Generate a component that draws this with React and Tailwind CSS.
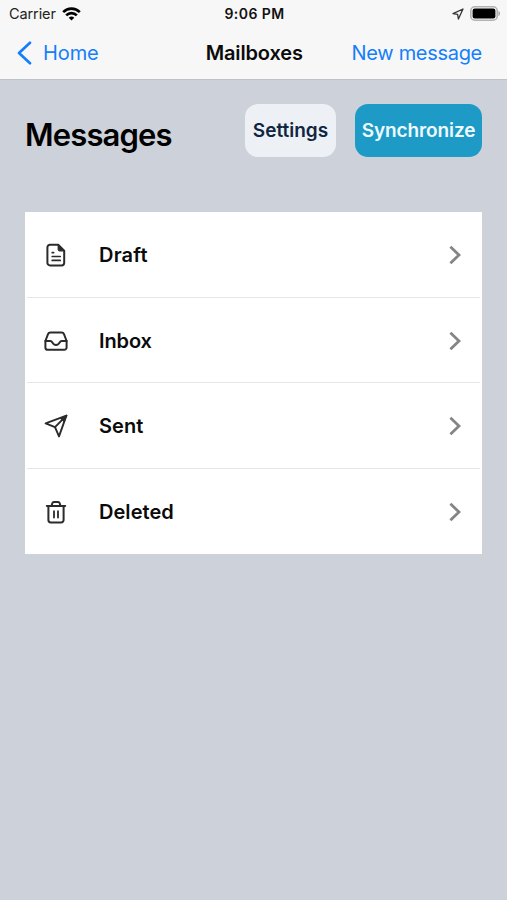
const DraftIcon = () => (
    <svg width="24" height="24" viewBox="0 0 24 24" fill="none" stroke="#2b2b2b" strokeWidth="2" strokeLinejoin="round" strokeLinecap="round">
        <path d="M6 1.8h8.2l6 6v12a2.6 2.6 0 0 1-2.6 2.6H6a2.6 2.6 0 0 1-2.6-2.6V4.4A2.6 2.6 0 0 1 6 1.8Z" />
        <path d="M14.2 1.8v4.4a1.6 1.6 0 0 0 1.6 1.6h4.4Z" fill="#2b2b2b" strokeWidth="1.2" />
        <path d="M8.2 9.6h1.4M8.2 13.5h8M8.2 17.4h8" strokeWidth="1.7" />
    </svg>
);

const InboxIcon = () => (
    <svg width="24" height="24" viewBox="0 0 24 24" fill="none" stroke="#2b2b2b" strokeWidth="2" strokeLinejoin="round" strokeLinecap="round">
        <path d="M1.4 12 4 5.2a2.6 2.6 0 0 1 2.4-1.7h11.2A2.6 2.6 0 0 1 20 5.2l2.6 6.8v6.4a2.4 2.4 0 0 1-2.4 2.4H3.8a2.4 2.4 0 0 1-2.4-2.4Z" />
        <path d="M1.4 12h5c1.2 0 1.5.7 1.9 1.4.7 1.5 2 2.5 3.7 2.5s3-1 3.7-2.5c.4-.7.7-1.4 1.9-1.4h5" />
    </svg>
);

const SentIcon = () => (
    <svg width="24" height="24" viewBox="0 0 24 24" fill="none" stroke="#2b2b2b" strokeWidth="1.9" strokeLinejoin="round" strokeLinecap="round">
        <path d="M22.4 1.6 1.6 9.4l9.4 3.7 4 9.3Z" />
        <path d="M22.4 1.6 11 13.1" />
        <path d="m22.4 1.6-6.4 2.6 3.9 3.2Z" fill="#2b2b2b" strokeWidth="1" />
    </svg>
);

const DeletedIcon = () => (
    <svg width="24" height="24" viewBox="0 0 24 24" fill="none" stroke="#2b2b2b" strokeWidth="2" strokeLinejoin="round" strokeLinecap="round">
        <path d="M2.8 6h18.4" />
        <path d="M7.6 5.8 8.4 3a1.6 1.6 0 0 1 1.5-1.1h4.2A1.6 1.6 0 0 1 15.6 3l.8 2.8" />
        <path d="M4.4 6v14a2.4 2.4 0 0 0 2.4 2.4h10.4a2.4 2.4 0 0 0 2.4-2.4V6" />
        <path d="M10 11.2v6.4M14 11.2v6.4" strokeWidth="1.8" />
    </svg>
);

const mailboxes = [
    { name: 'Draft', icon: DraftIcon, spacing: 'tracking-[0.2px]' },
    { name: 'Inbox', icon: InboxIcon, spacing: 'tracking-[-0.1px]' },
    { name: 'Sent', icon: SentIcon, spacing: 'tracking-[0.1px]' },
    { name: 'Deleted', icon: DeletedIcon, spacing: 'tracking-[0.05px]' },
];

const StatusBar = () => (
    <div className="grid h-[27px] grid-cols-3 items-center pl-[8px] pr-[6px]">
        <div className="flex items-center gap-[6px] pl-px">
            <span className="text-[14.5px] tracking-[-0.1px] text-[#222]">Carrier</span>
            <svg width="19" height="14" viewBox="0 0 19 14" fill="none" stroke="#000" strokeWidth="2.7">
                <path d="M1.2 5.1a11.8 11.8 0 0 1 16.6 0" />
                <path d="M4.2 8.4a7.5 7.5 0 0 1 10.6 0" />
                <path d="M9.5 13.6 6.7 10.8a4 4 0 0 1 5.6 0Z" fill="#000" stroke="none" />
            </svg>
        </div>
        <span className="text-center text-[14px] tracking-[0.45px] font-semibold text-[#111]">9:06 PM</span>
        <div className="flex items-center justify-end gap-[6px]">
            <svg width="12" height="12" viewBox="0 0 12 12" fill="none" stroke="#333" strokeWidth="1.3" strokeLinejoin="round">
                <path d="M11 1 1 5.6l4.6.8.8 4.6Z" />
            </svg>
            <svg width="31" height="15" viewBox="0 0 31 15">
                <rect x="0.8" y="0.8" width="26.4" height="13.4" rx="4" fill="#f7f7f7" stroke="#b2b2b2" strokeWidth="1.6" />
                <rect x="2.6" y="2.6" width="22.8" height="9.8" rx="2.2" fill="#000" />
                <path d="M28.4 5c2.2.6 2.2 4.4 0 5Z" fill="#aaa" />
            </svg>
        </div>
    </div>
);

const NavBar = () => (
    <div className="flex h-[51px] items-center justify-between pl-[17px] pr-[25px] text-[20px] text-[#147efb]">
        <button className="flex w-[140px] items-center gap-[11px]">
            <svg width="15" height="24" viewBox="0 0 15 24" fill="none" stroke="#147efb" strokeWidth="2.7" strokeLinecap="round" strokeLinejoin="round">
                <path d="M13 1.8 2 12l11 10.2" />
            </svg>
            <span className="tracking-[-0.1px]">Home</span>
        </button>
        <h1 className="font-semibold tracking-[-0.15px] text-[#0b0b0b]">Mailboxes</h1>
        <button className="tracking-[-0.3px] whitespace-nowrap">New message</button>
    </div>
);

const App = () => {
    return (
        <div className="flex min-h-screen flex-col bg-[#cdd2da] font-['Inter',sans-serif]">
            <header className="h-20 border-b border-[#bfc3c9] bg-[#f7f7f7]">
                <StatusBar />
                <NavBar />
            </header>

            <main className="px-[25px] pt-[23.5px]">
                <div className="flex items-start">
                    <h2 className="flex-1 pt-[10px] text-[31px] leading-[42px] font-semibold tracking-[-0.85px] text-black">Messages</h2>
                    <div className="flex gap-[19px] text-[19px] font-semibold">
                        <button className="h-[53.5px] w-[91px] rounded-[13px] bg-[#edf1f5] pt-[2px] text-[#102542]">Settings</button>
                        <button className="h-[53.5px] w-[127px] rounded-[13px] bg-[#1e9ac7] pt-[2px] tracking-[-0.1px] text-[#edfaff]">Synchronize</button>
                    </div>
                </div>

                {/* Mailbox list */}
                <ul className="mt-[55.25px] bg-white">
                    {mailboxes.map(({ name, icon: Icon, spacing }, i) => (
                        <li key={name} className="px-[2px]">
                            <div className={`flex h-[85.5px] items-center pt-px pr-[19px] pl-[17px] ${i < 3 ? 'border-b border-[#e3e6e9]' : ''}`}>
                                <Icon />
                                <span className={`ml-[31px] flex-1 text-[20px] font-semibold text-[#0b0b0b] ${spacing}`}>{name}</span>
                                <svg width="12" height="20" viewBox="0 0 12 20" fill="none" stroke="#858585" strokeWidth="2.8">
                                    <path d="M1.4 1.8 10 10l-8.6 8.2" />
                                </svg>
                            </div>
                        </li>
                    ))}
                </ul>
            </main>
        </div>
    );
};

export default App;
